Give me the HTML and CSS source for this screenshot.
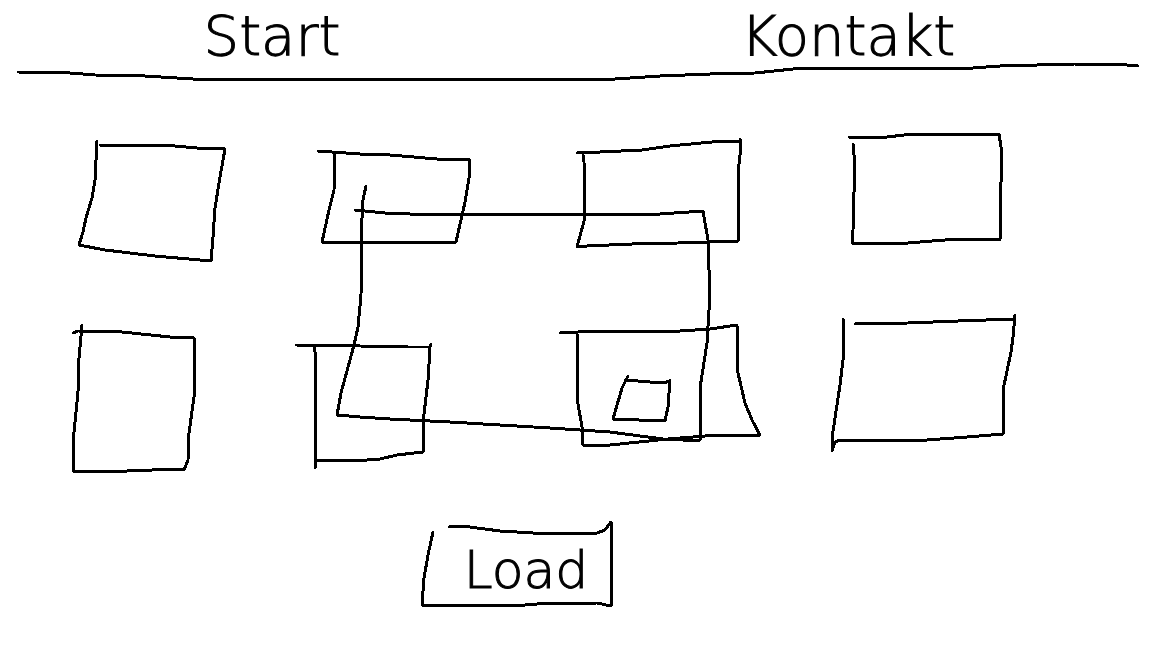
FILE: index.html
```html
<!DOCTYPE html>
<html lang="de">
<head>
<meta charset="utf-8">
<meta name="viewport" content="width=device-width, initial-scale=1">
<title>Start</title>
<link rel="stylesheet" href="styles.css">
</head>
<body>
<header class="header">
  <nav class="nav">
    <a class="nav-link" href="#start">Start</a>
    <a class="nav-link" href="#kontakt">Kontakt</a>
  </nav>
  <svg class="sketch" viewBox="0 64 1152 20" aria-hidden="true"><path d="M18 72L70 73L95 75L145 76L193 79H615L660 76L710 74L755 73L793 69L823 68H973L1000 66L1075 64H1115L1138 66"/></svg>
</header>
<main class="main">
  <div class="gallery">
    <svg class="sketch" viewBox="48 120 245 180" aria-hidden="true"><path d="M97 141L95 180L92 198L86 218L83 232L79 245L105 250L155 256L211 261L213 237L215 208L220 177L225 149L197 148L175 146L145 145H100"/></svg>
    <svg class="sketch" viewBox="293 120 245 180" aria-hidden="true"><path d="M318 151L360 154L390 155L437 159L470 160L469 178L465 202L456 242H322L329 210L334 190L335 153"/></svg>
    <svg class="sketch" viewBox="538 120 245 180" aria-hidden="true"><path d="M577 153L600 152L642 150L670 146L712 142L740 141M740 139V155L738 173V241L678 243L632 244L587 246L577 247L583 225L585 217L584 162L583 155"/></svg>
    <svg class="sketch" viewBox="783 120 245 180" aria-hidden="true"><path d="M849 137H887L913 134H999L1001 147V182L1000 240L988 239H957L908 243H852L853 230L854 192V155L853 144"/></svg>
    <svg class="sketch" viewBox="48 300 245 180" aria-hidden="true"><path d="M73 333L78 331L122 332L170 337L194 338V397L189 433L188 460L184 470L178 469L127 471H73V442L78 392L79 358L82 325"/></svg>
    <svg class="sketch" viewBox="293 300 245 180" aria-hidden="true"><path d="M296 345L360 346L408 347H430L431 344M430 348L428 380L423 423V452L397 455L380 459L367 460H316M315 468V352L314 345"/></svg>
    <svg class="sketch" viewBox="538 300 245 180" aria-hidden="true"><path d="M560 333L597 331H680L710 329L737 325L738 373L745 403L752 420L760 435H718L668 439L610 445H583L582 427L577 398V334"/></svg>
    <svg class="sketch" viewBox="783 300 245 180" aria-hidden="true"><path d="M855 324L908 323L958 321L1014 319M1015 315L1013 337L1011 352L1003 390V434L967 437L927 440H840L835 442L832 451V438L840 385L843 360V319"/></svg>
    <svg class="sketch overlay" viewBox="48 120 980 360" aria-hidden="true"><path d="M366 186L363 200L362 218L361 295L358 327L354 345L341 393L337 415L360 417L390 419L450 422L550 428L610 432L663 439L683 440H700V388L707 343L709 310V270L708 240L703 211L660 214H410L385 213L355 210"/><path d="M628 376L622 388L613 419L665 421L668 407L670 380M625 380L663 383L670 381"/></svg>
  </div>
</main>
<footer class="footer">
  <button class="load" type="button">
    <svg class="sketch load-frame" viewBox="420 520 192 88" aria-hidden="true"><path d="M433 532L428 555L424 578L422 605H525L537 604L597 603L611 606V522L605 530L597 533H533L500 531L462 526L449 527"/></svg>
    <span class="load-label">Load</span>
  </button>
</footer>
</body>
</html>
```
FILE: styles.css
```css
* {
  box-sizing: border-box;
}

body {
  margin: 0;
  background: #fff;
  color: #000;
  font-family: "DejaVu Sans", sans-serif;
  font-weight: 200;
  -webkit-text-stroke: 1px #000;
}

.sketch {
  display: block;
  width: 100%;
  overflow: visible;
  fill: none;
  stroke: #000;
  stroke-width: 3;
  stroke-linecap: round;
  stroke-linejoin: round;
  shape-rendering: crispEdges;
}

.nav {
  display: grid;
  grid-template-columns: 17fr 19fr;
  justify-items: center;
  padding-top: 8px;
}

.nav-link {
  color: inherit;
  font-size: 56px;
  line-height: 56px;
  text-decoration: none;
}

.main {
  padding: 36px 124px 0 48px;
}

.gallery {
  position: relative;
  display: grid;
  grid-template-columns: repeat(4, 1fr);
}

.overlay {
  position: absolute;
  inset: 0;
  pointer-events: none;
}

.footer {
  display: flex;
  justify-content: center;
  padding: 40px 120px 40px 0;
}

.load {
  position: relative;
  width: 192px;
  height: 88px;
  padding: 12px 0 0 20px;
  border: 0;
  background: none;
  color: inherit;
  font: inherit;
  font-size: 52px;
  line-height: 60px;
  cursor: pointer;
}

.load-frame {
  position: absolute;
  inset: 0;
}
```
